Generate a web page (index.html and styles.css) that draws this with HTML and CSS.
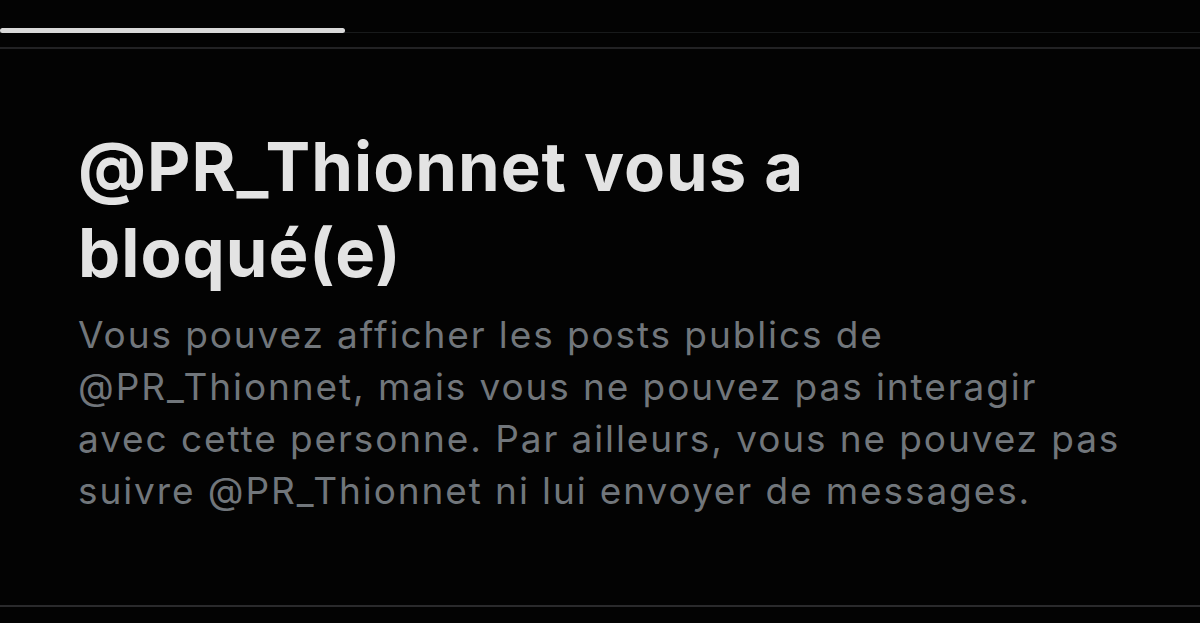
FILE: index.html
```html
<!DOCTYPE html>
<html lang="fr">
<head>
<meta charset="utf-8">
<link rel="stylesheet" href="styles.css">
</head>
<body>
<div class="screen">
  <div class="tabs">
    <div class="indicator"></div>
  </div>
  <div class="divider"></div>
  <main class="notice">
    <h1 class="title">@PR_Thionnet vous a<br>bloqué(e)</h1>
    <p class="desc">Vous pouvez afficher les posts publics de<br>@PR_Thionnet, mais vous ne pouvez pas interagir<br>avec cette personne. Par ailleurs, vous ne pouvez pas<br>suivre @PR_Thionnet ni lui envoyer de messages.</p>
  </main>
  <div class="bottom-divider"></div>
</div>
</body>
</html>
```
FILE: styles.css
```css
html, body {
  margin: 0;
  padding: 0;
  background: #030303;
}
.screen {
  width: 1200px;
  height: 623px;
  overflow: hidden;
  display: flex;
  flex-direction: column;
  background: #030303;
  font-family: Inter, "Liberation Sans", Arial, sans-serif;
}
.tabs {
  height: 32px;
  border-bottom: 1px solid #181a1b;
  position: relative;
}
.indicator {
  position: absolute;
  left: 0;
  top: 28px;
  width: 345px;
  height: 5px;
  border-radius: 3px;
  background: #d9d9d9;
}
.divider {
  margin-top: 14px;
  height: 2px;
  background: #222224;
}
.notice {
  flex: 1;
  padding: 0 78px;
}
.title {
  margin: 75px 0 13px;
  font-size: 67px;
  line-height: 86px;
  font-weight: 700;
  letter-spacing: 1px;
  color: #e3e3e3;
}
.desc {
  margin: 0;
  font-size: 37px;
  line-height: 52px;
  font-weight: 400;
  letter-spacing: 1.9px;
  color: #71767b;
}
.bottom-divider {
  height: 2px;
  background: #2a2a2c;
  margin-bottom: 16px;
}
```
